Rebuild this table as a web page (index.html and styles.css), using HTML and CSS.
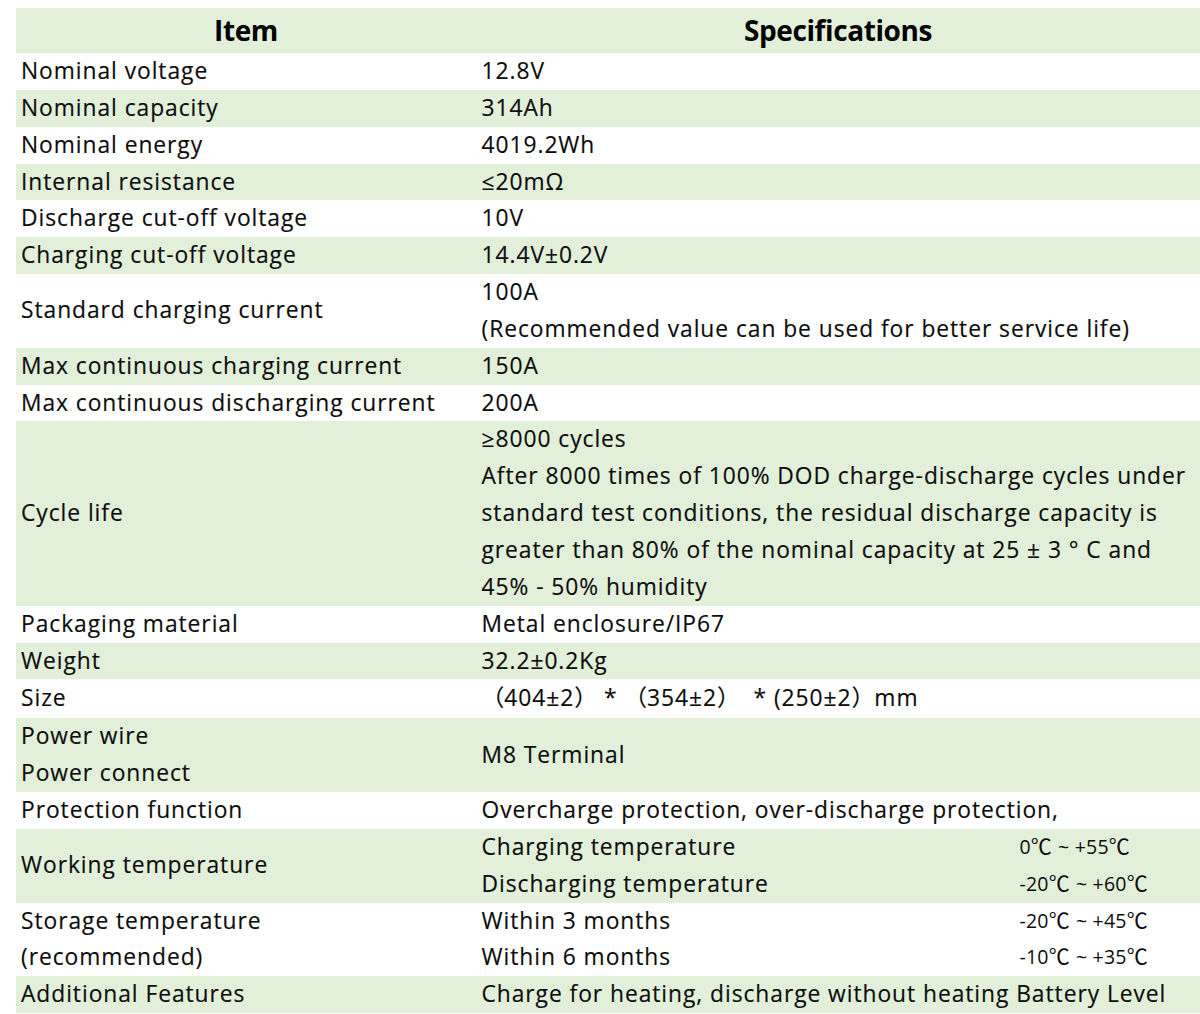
FILE: index.html
```html
<!DOCTYPE html>
<html lang="en">
<head>
<meta charset="utf-8">
<title>Specifications</title>
<link rel="stylesheet" href="styles.css">
</head>
<body>
<table class="spec">
  <colgroup><col class="c-item"><col class="c-spec"></colgroup>
  <thead>
    <tr><th class="h-item">Item</th><th class="h-spec">Specifications</th></tr>
  </thead>
  <tbody>
    <tr><td>Nominal voltage</td><td>12.8V</td></tr>
    <tr><td>Nominal capacity</td><td>314Ah</td></tr>
    <tr><td>Nominal energy</td><td>4019.2Wh</td></tr>
    <tr><td>Internal resistance</td><td>≤20mΩ</td></tr>
    <tr><td>Discharge cut-off voltage</td><td>10V</td></tr>
    <tr><td>Charging cut-off voltage</td><td>14.4V±0.2V</td></tr>
    <tr><td>Standard charging current</td><td>100A<br>(Recommended value can be used for better service life)</td></tr>
    <tr><td>Max continuous charging current</td><td>150A</td></tr>
    <tr><td>Max continuous discharging current</td><td>200A</td></tr>
    <tr><td>Cycle life</td><td>≥8000 cycles<br>After 8000 times of 100% DOD charge-discharge cycles under<br>standard test conditions, the residual discharge capacity is<br>greater than 80% of the nominal capacity at 25 ± 3 ° C and<br>45% - 50% humidity</td></tr>
    <tr><td>Packaging material</td><td>Metal enclosure/IP67</td></tr>
    <tr><td>Weight</td><td>32.2±0.2Kg</td></tr>
    <tr class="r-size"><td>Size</td><td><span class="fw">（</span>404±2<span class="fw">）</span> * <span class="fw">（</span>354±2<span class="fw">）</span>&nbsp; * (250±2<span class="fw">）</span>mm</td></tr>
    <tr><td>Power wire<br>Power connect</td><td>M8 Terminal</td></tr>
    <tr><td>Protection function</td><td>Overcharge protection, over-discharge protection,</td></tr>
    <tr><td>Working temperature</td><td>
      <div class="sub"><span>Charging temperature</span><span class="temp">0<span class="deg">℃</span> ~ +55<span class="deg">℃</span></span></div>
      <div class="sub"><span>Discharging temperature</span><span class="temp">-20<span class="deg">℃</span> ~ +60<span class="deg">℃</span></span></div>
    </td></tr>
    <tr><td>Storage temperature<br>(recommended)</td><td>
      <div class="sub"><span>Within 3 months</span><span class="temp">-20<span class="deg">℃</span> ~ +45<span class="deg">℃</span></span></div>
      <div class="sub"><span>Within 6 months</span><span class="temp">-10<span class="deg">℃</span> ~ +35<span class="deg">℃</span></span></div>
    </td></tr>
    <tr><td>Additional Features</td><td>Charge for heating, discharge without heating Battery Level</td></tr>
  </tbody>
</table>
</body>
</html>
```

FILE: styles.css
```css
html, body {
  margin: 0;
  padding: 0;
  background: #ffffff;
}

body {
  overflow: hidden;
}

.spec {
  margin: 8px 0 0 16px;
  width: 1184px;
  border-collapse: collapse;
  table-layout: fixed;
  font-family: "Open Sans", "Noto Sans CJK SC", sans-serif;
  color: #0c0c0c;
}

.c-item { width: 460px; }
.c-spec { width: 724px; }

.spec th {
  background: #e2efd9;
  height: 45px;
  padding: 0;
  font-size: 28px;
  font-weight: 700;
  letter-spacing: -0.4px;
  line-height: 45px;
  text-align: center;
  color: #000;
}

.spec td {
  padding: 0 0 0 5px;
  font-size: 22.8px;
  letter-spacing: 0.95px;
  line-height: 36.85px;
  vertical-align: middle;
  white-space: nowrap;
  text-align: left;
  -webkit-text-stroke: 0.15px #0c0c0c;
}

.spec td + td {
  padding-left: 5.5px;
}

.spec tbody tr:nth-child(even) td {
  background: #e2efd9;
}

.r-size td {
  height: 39px;
}

.fw {
  font-family: "Noto Sans CJK SC", sans-serif;
  letter-spacing: 0;
  line-height: 0;
}

.sub {
  display: grid;
  grid-template-columns: 538px auto;
  height: 36.85px;
  line-height: 36.85px;
}

.temp {
  font-size: 19.5px;
  letter-spacing: 0.2px;
  -webkit-text-stroke: 0;
}

.deg {
  font-family: "Noto Sans CJK SC", sans-serif;
  font-size: 21px;
  line-height: 0;
  letter-spacing: 1px;
}
```
